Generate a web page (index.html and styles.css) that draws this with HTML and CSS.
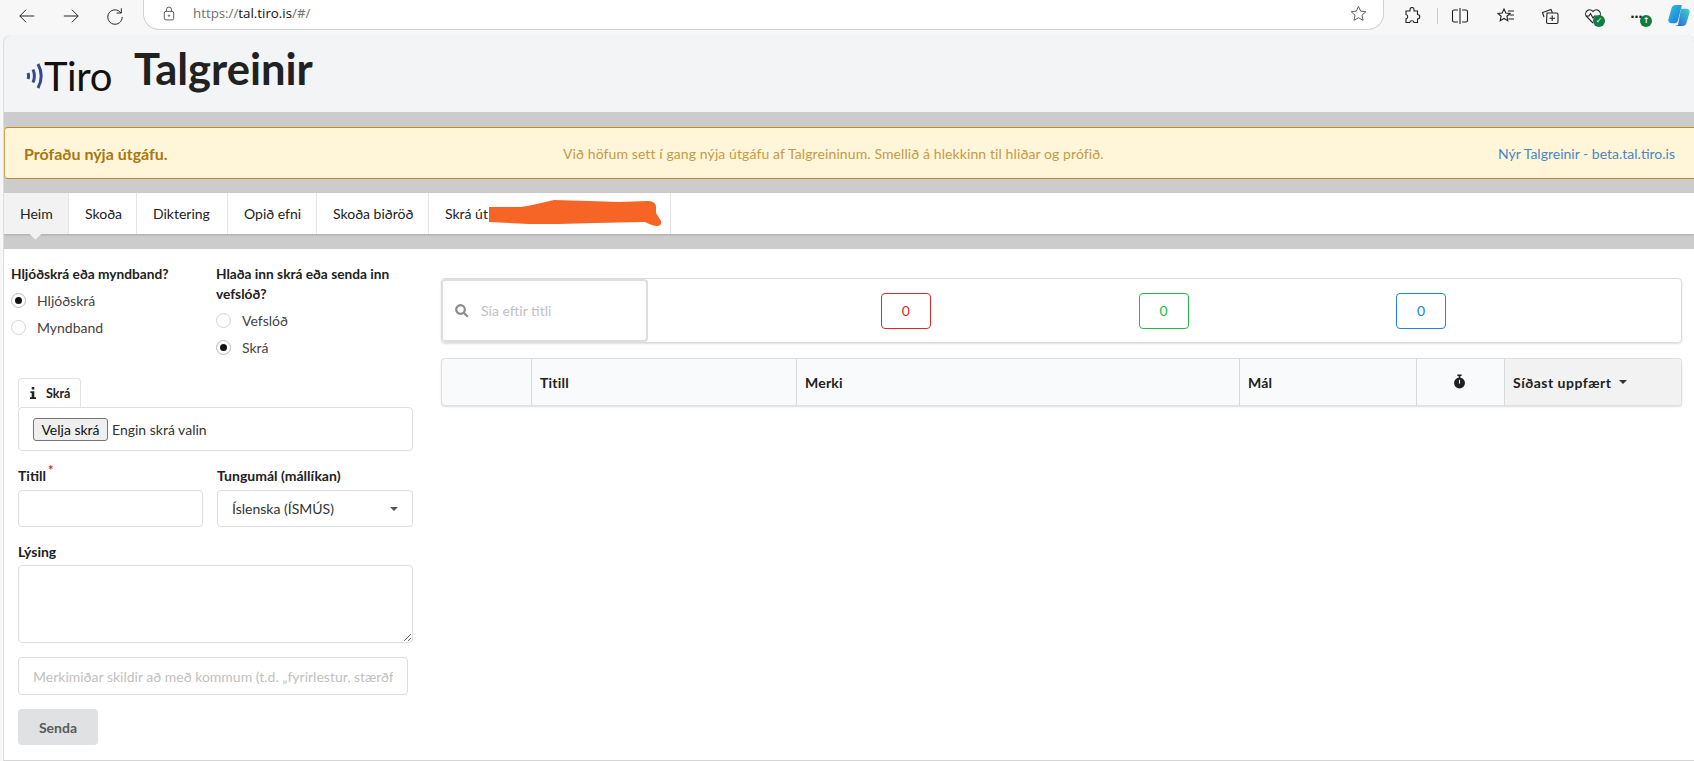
FILE: index.html
```html
<!DOCTYPE html>
<html lang="is">
<head>
<meta charset="utf-8">
<title>Talgreinir</title>
<link rel="stylesheet" href="styles.css">
</head>
<body>
<div class="toolbar">
  <svg class="tb-icon back" viewBox="0 0 20 20"><path d="M18 10H2M9 3l-7 7 7 7"/></svg>
  <svg class="tb-icon fwd" viewBox="0 0 20 20"><path d="M2 10h16M11 3l7 7-7 7"/></svg>
  <svg class="tb-icon reload" viewBox="0 0 20 20"><path d="M16.500 6.500A8 8 0 1 0 18 11M17 1.500v5.200h-5.200"/></svg>
  <div class="address">
    <svg class="lock" viewBox="0 0 14 16"><rect x="1.500" y="5.500" width="11" height="10" rx="2"/><path d="M4 5.500V3.500a3 3 0 0 1 6 0v2"/><circle cx="7" cy="10.500" r=".8"/></svg>
    <span class="url"><span class="dim">https://</span>tal.tiro.is<span class="dim">/#/</span></span>
    <svg class="star" viewBox="0 0 18 18"><path d="M9 1.500l2.300 5 5.400.6-4 3.700 1.100 5.400L9 13.500l-4.800 2.700 1.100-5.400-4-3.700 5.400-.6z"/></svg>
  </div>
  <svg class="tb-icon ext" viewBox="0 0 18 18"><path d="M7 2.500a2 2 0 0 1 4 0V4h3.500v3.500a2.200 2.200 0 0 1 0 4.500v3.500H11a2.200 2.200 0 0 0-4.300 0H3v-3.700a2.200 2.200 0 0 0 0-4.300V4h4z"/></svg>
  <span class="tb-sep"></span>
  <svg class="tb-icon split" viewBox="0 0 18 18"><path d="M9 1v16M7 3H3a1.500 1.500 0 0 0-1.500 1.500v9A1.500 1.500 0 0 0 3 15h4M11 3h4a1.500 1.500 0 0 1 1.500 1.500v9A1.500 1.500 0 0 1 15 15h-4"/></svg>
  <svg class="tb-icon favs" viewBox="0 0 18 18"><path d="M7 2l1.800 4 4.200.5-3.100 2.800.9 4.400L7 11.500l-3.800 2.200.9-4.400L1 6.500 5.200 6zM11 4h6M12.500 8H17M11.500 12H17"/></svg>
  <svg class="tb-icon coll" viewBox="0 0 18 18"><path d="M3 10L1.500 5.500 10 2.500l1.300 3M6 6h9.500a1.500 1.500 0 0 1 1.500 1.500V15a1.500 1.500 0 0 1-1.500 1.500H7A1.500 1.500 0 0 1 5.500 15zM11.200 8.500v5.500M8.500 11.200H14"/></svg>
  <span class="health">
    <svg class="tb-icon" viewBox="0 0 18 18"><path d="M9 16L2.500 9.500A4 4 0 0 1 9 4.500a4 4 0 0 1 6.500 5M1.500 9H5l1.500-2.500L9 11l1.500-2h2"/></svg>
    <span class="dot check">✓</span>
  </span>
  <span class="more">
    <span class="dots">···</span>
    <span class="dot up">↑</span>
  </span>
  <svg class="copilot" viewBox="0 0 24 24">
    <defs>
      <linearGradient id="cpa" x1="0" y1="0" x2="1" y2="1"><stop offset="0" stop-color="#2fc7d8"/><stop offset="1" stop-color="#1f6fe0"/></linearGradient>
      <linearGradient id="cpb" x1="1" y1="0" x2="0" y2="1"><stop offset="0" stop-color="#3fd6c0"/><stop offset="1" stop-color="#2a5fe0"/></linearGradient>
    </defs>
    <path fill="url(#cpa)" d="M8 1h7l-4 16a4 4 0 0 1-4 3H4a3 3 0 0 1-3-4l3-11a5 5 0 0 1 4-4z"/>
    <path fill="url(#cpb)" d="M14 5h6a3 3 0 0 1 3 4l-3 10a5 5 0 0 1-5 4H8l3-1 3-17z"/>
  </svg>
</div>

<div class="frame">
  <header class="head">
    <div class="logo">
      <svg class="waves" viewBox="0 0 17 28"><path d="M2 11c.8 2 .8 4 0 6M7 7.500c1.800 4.200 1.800 8.800 0 13M12 2c4 7.500 4 16.500 0 24"/></svg>
      <span class="logo-text">Tiro</span>
    </div>
    <h1 class="title">Talgreinir</h1>
  </header>

  <div class="message">
    <strong class="msg-head">Prófaðu nýja útgáfu.</strong>
    <span class="msg-body">Við höfum sett í gang nýja útgáfu af Talgreininum. Smellið á hlekkinn til hliðar og prófið.</span>
    <a class="msg-link">Nýr Talgreinir - beta.tal.tiro.is</a>
  </div>

  <nav class="menu">
    <a class="item active i1">Heim</a>
    <a class="item i2">Skoða</a>
    <a class="item i3">Diktering</a>
    <a class="item i4">Opið efni</a>
    <a class="item i5">Skoða biðröð</a>
    <a class="item i6">Skrá út
      <svg class="scribble" viewBox="0 0 240 41"><path d="M60 14L92 14Q104 12 112 10L125 7L160 8L190 9L218 8Q226 8 227 13L227 20L232 28Q233 33 228 33Q224 33 216 29L165 30L130 31L100 31L60 29Z"/></svg>
    </a>
  </nav>

  <main class="content">
    <section class="left">
      <div class="choices">
        <div class="group g1">
          <div class="label grp">Hljóðskrá eða myndband?</div>
          <div class="radio"><span class="dotbox on"></span>Hljóðskrá</div>
          <div class="radio"><span class="dotbox"></span>Myndband</div>
        </div>
        <div class="group g2">
          <div class="label grp">Hlaða inn skrá eða senda inn vefslóð?</div>
          <div class="radio"><span class="dotbox"></span>Vefslóð</div>
          <div class="radio"><span class="dotbox on"></span>Skrá</div>
        </div>
      </div>

      <div class="form">
        <div class="tag"><svg class="info" viewBox="0 0 8 14"><path d="M2.500 0h3v3h-3zM1 5h4.500v7H7.500v2H.5v-2h2V7H1z"/></svg>Skrá</div>
        <div class="filebox"><span class="filebtn">Velja skrá</span><span class="filename">Engin skrá valin</span></div>

        <div class="pair">
          <div class="field-a">
            <div class="label">Titill<sup class="req">*</sup></div>
            <input class="input" type="text">
          </div>
          <div class="field-b">
            <div class="label">Tungumál (mállíkan)</div>
            <div class="select"><span>Íslenska (ÍSMÚS)</span><i class="caret"></i></div>
          </div>
        </div>

        <div class="label desc">Lýsing</div>
        <textarea class="area"></textarea>
        <input class="input tags" type="text" placeholder="Merkimiðar skildir að með kommum (t.d. „fyrirlestur, stærðf">
        <button class="send" type="button">Senda</button>
      </div>
    </section>

    <section class="right">
      <div class="stats">
        <div class="search">
          <svg class="mag" viewBox="0 0 14 14"><circle cx="5.500" cy="5.500" r="4.300"/><path d="M8.500 8.500l4.300 4.300"/></svg>
          <input class="search-input" type="text" placeholder="Sía eftir titli">
        </div>
        <div class="counts">
          <div class="cell"><span class="count red">0</span></div>
          <div class="cell"><span class="count green">0</span></div>
          <div class="cell"><span class="count blue">0</span></div>
        </div>
      </div>

      <div class="thead">
        <div class="th c1"></div>
        <div class="th c2">Titill</div>
        <div class="th c3">Merki</div>
        <div class="th c4">Mál</div>
        <div class="th c5"><svg class="watch" viewBox="0 0 12 14"><path d="M4 0h4v1.500H6.800V3A5 5 0 1 1 5.200 3V1.500H4z"/><path class="hand" d="M6 5v3.500"/></svg></div>
        <div class="th c6">Síðast uppfært<i class="caret dark"></i></div>
      </div>
    </section>
  </main>
</div>
</body>
</html>
```
FILE: styles.css
```css
* { box-sizing: border-box; }
html, body { margin: 0; height: 761px; overflow: hidden; }
body { background: #f7f7f7; font-family: Lato, "Open Sans", sans-serif; font-size: 14px; color: #212121; }

/* browser toolbar */
.toolbar { height: 35px; display: flex; align-items: center; padding-bottom: 4px; }
.tb-icon { width: 18px; height: 18px; fill: none; stroke: #222; stroke-width: 1.100; flex: none; }
.back { margin-left: 18px; }
.fwd { margin-left: 26px; }
.reload { margin-left: 26px; }
.address { width: 1241px; flex: none; height: 32px; margin: -4px 0 0 19px; background: #fff; border: 1px solid #d2d2d2; border-top: 0; border-radius: 0 0 16px 16px; display: flex; align-items: center; padding: 0 16px 0 19px; }
.lock { width: 12px; height: 15px; fill: none; stroke: #444; stroke-width: 1; }
.url { margin-left: 18px; font: 13.300px "Open Sans", sans-serif; color: #111; }
.dim { color: #6f6f6f; }
.star { margin-left: auto; width: 17px; height: 17px; fill: none; stroke: #555; stroke-width: 1; }
.ext { margin-left: 19px; }
.tb-sep { width: 1px; height: 16px; background: #ccc; margin-left: 16px; flex: none; }
.split { margin-left: 13px; }
.favs { margin-left: 28px; }
.coll { margin-left: 26px; }
.health { margin-left: 25px; position: relative; width: 18px; height: 18px; flex: none; }
.dot { position: absolute; width: 12px; height: 12px; border-radius: 50%; background: #107c41; color: #fff; font: bold 8px/12px "DejaVu Sans", sans-serif; text-align: center; }
.check { left: 9px; top: 8px; }
.more { position: relative; width: 20px; height: 18px; margin-left: 28px; flex: none; }
.dots { font: bold 13px/14px "DejaVu Sans", sans-serif; color: #222; letter-spacing: -1px; }
.up { left: 10px; top: 8px; }
.copilot { width: 24px; height: 23px; margin-left: 17px; flex: none; }

/* page frame */
.frame { margin-left: 3px; height: 726px; background: #ccc; border-left: 1px solid #ddd; border-top-left-radius: 8px; border-top-right-radius: 8px; overflow: hidden; }
.head { height: 77px; background: #f3f4f6; display: flex; align-items: flex-start; }
.logo { display: flex; align-items: center; margin: 21px 0 0 22px; height: 36px; }
.waves { width: 17px; height: 28px; fill: none; stroke: #37488c; stroke-width: 3; margin-top: 4px; flex: none; }
.logo-text { font: 400 40px/36px Lato, sans-serif; color: #111; margin-left: 1px; margin-top: 3px; letter-spacing: -.4px; }
.title { margin: 6px 0 0 22px; font: 700 43.500px/54px Lato, sans-serif; color: #212121; }

.message { height: 52px; margin-top: 15px; background: #fff6da; border: 1px solid #c28a1f; border-left-color: #d3a655; border-right: 0; border-radius: 4px 0 0 4px; display: flex; align-items: center; padding: 0 19px 0 19px; position: relative; }
.msg-head { font-size: 16px; color: #a9770f; }
.msg-body { position: absolute; left: 558px; top: 16px; font-size: 14px; line-height: 20px; letter-spacing: .1px; color: #c59a45; }
.msg-link { margin-left: auto; color: #4a86c4; font-size: 14px; }

.menu { height: 41px; margin-top: 14px; background: #fff; display: flex; box-shadow: 0 1px 2px rgba(34,36,38,.2); }
.item { display: flex; align-items: center; padding-left: 16px; border-right: 1px solid #e4e4e5; position: relative; font-size: 14px; color: #222; }
.i1 { width: 65px; }
.i2 { width: 68px; }
.i3 { width: 91px; }
.i4 { width: 89px; }
.i5 { width: 112px; }
.i6 { width: 242px; }
.active { background: #f2f2f2; }
.active::after { content: ""; position: absolute; left: 27px; bottom: -4px; width: 9px; height: 9px; background: #f2f2f2; transform: rotate(45deg); }
.scribble { position: absolute; left: 0; top: 0; width: 240px; height: 41px; fill: #f66525; }

/* main */
.content { height: 512px; margin-top: 15px; background: #fff; display: flex; border-bottom: 1px solid #d5d5d5; }
.left { width: 437px; flex: none; padding: 15px 0 0 7px; }
.label { font-size: 14px; font-weight: 700; line-height: 20px; color: #212121; }
.grp { font-size: 13.700px; }
.choices { display: flex; height: 114px; }
.g1 { width: 205px; }
.g2 { width: 190px; }
.group .label { margin-bottom: 3px; }
.radio { display: flex; align-items: center; height: 27px; font-size: 14px; color: #444; }
.dotbox { width: 15px; height: 15px; border-radius: 50%; border: 1px solid #d4d4d5; margin-right: 11px; flex: none; position: relative; background: #fff; }
.dotbox.on { border-color: #bbb; }
.dotbox.on::after { content: ""; position: absolute; left: 3px; top: 3px; width: 7px; height: 7px; border-radius: 50%; background: #111; }

.form { padding-left: 7px; }
.tag { width: 63px; height: 29px; border: 1px solid #e0e1e2; border-bottom: 0; border-radius: 4px 4px 0 0; display: flex; align-items: center; padding-left: 10px; font-size: 12.500px; font-weight: 700; color: #222; }
.info { width: 8px; height: 12px; fill: #222; margin-right: 9px; flex: none; }
.filebox { width: 395px; height: 44px; border: 1px solid #dedede; border-radius: 4px; display: flex; align-items: center; padding-left: 14px; font-size: 14px; }
.filebtn { width: 75px; height: 23px; border: 1px solid #767676; border-radius: 3px; background: #efefef; text-align: center; line-height: 21px; color: #111; }
.filename { margin-left: 4px; color: #333; }
.pair { display: flex; margin-top: 15px; }
.field-a { width: 199px; }
.field-b { width: 196px; }
.req { color: #db2828; font-size: 13px; line-height: 0; margin-left: 2px; }
.input { display: block; height: 37px; border: 1px solid #dedede; border-radius: 4px; padding: 0 14px; font: 14px Lato, sans-serif; outline: none; background: #fff; }
.field-a .input { width: 185px; margin-top: 4px; }
.select { height: 37px; margin-top: 4px; border: 1px solid #dedede; border-radius: 4px; display: flex; align-items: center; justify-content: space-between; padding: 0 14px; font-size: 14px; color: #333; }
.caret { display: block; width: 0; height: 0; border: 4px solid transparent; border-top: 4px solid #555; border-bottom: 0; }
.desc { margin-top: 15px; }
.area { display: block; width: 395px; height: 78px; margin-top: 3px; border: 1px solid #dedede; border-radius: 4px; outline: none; }
.tags { width: 390px; height: 38px; margin-top: 14px; }
.tags::placeholder { color: #bfbfbf; opacity: 1; }
.send { display: block; width: 80px; height: 36px; margin-top: 14px; border: 0; border-radius: 4px; background: #e0e1e2; color: #5a5a5a; font: 700 14px Lato, sans-serif; }

/* right */
.right { flex: 1; min-width: 0; padding: 29px 12px 0 0; }
.stats { height: 65px; border: 1px solid #dcdcdd; border-radius: 4px; box-shadow: 0 1px 2px rgba(34,36,38,.15); display: flex; }
.search { width: 206px; flex: none; display: flex; align-items: center; padding-left: 12px; border: 2px solid #dedede; border-radius: 4px; border-left-width: 1px; height: 63px; }
.mag { width: 14px; height: 14px; fill: none; stroke: #8a8a8a; stroke-width: 2.200; flex: none; }
.search-input { border: 0; outline: none; margin-left: 12px; width: 160px; font: 14px Lato, sans-serif; padding: 0; }
.search-input::placeholder { color: #bfbfbf; opacity: 1; }
.counts { flex: 1; display: flex; padding: 0 131px 0 129px; align-items: center; }
.cell { flex: 1; display: flex; justify-content: center; }
.count { width: 50px; height: 36px; border: 1px solid; border-radius: 4px; text-align: center; line-height: 34px; font-size: 14px; }
.red { color: #db2828; }
.green { color: #21ba45; }
.blue { color: #2185d0; }

.thead { height: 48px; margin-top: 15px; display: flex; background: #f9fafb; border: 1px solid #dedfe0; border-radius: 4px; box-shadow: 0 1px 2px rgba(34,36,38,.15); }
.th { display: flex; align-items: center; padding-left: 8px; border-right: 1px solid #d8d9da; font-size: 14px; font-weight: 700; letter-spacing: .2px; color: #212121; }
.c1 { width: 90px; }
.c2 { width: 265px; }
.c3 { width: 443px; }
.c4 { width: 177px; }
.c5 { width: 88px; justify-content: center; padding: 0 3px 0 0; }
.c6 { flex: 1; background: #f2f2f2; border-right: 0; border-radius: 0 4px 4px 0; letter-spacing: .5px; }
.watch { width: 13px; height: 16px; fill: #212121; }
.hand { fill: none; stroke: #f9fafb; stroke-width: 1; }
.dark { margin-left: 7px; border-top-color: #333; }
```
